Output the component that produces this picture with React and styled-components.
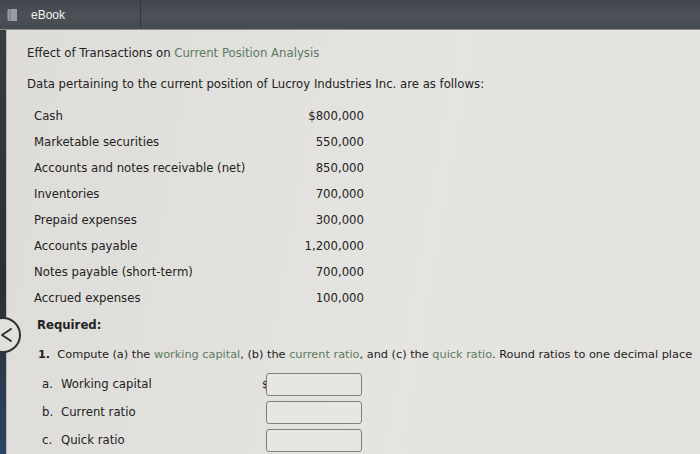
import styled, { createGlobalStyle } from "styled-components";

const GlobalStyle = createGlobalStyle`
  html, body {
    margin: 0;
    padding: 0;
    background: #e3e1de;
  }
  * { box-sizing: border-box; }
`;

const rows = [
  { label: "Cash", value: "$800,000" },
  { label: "Marketable securities", value: "550,000" },
  { label: "Accounts and notes receivable (net)", value: "850,000" },
  { label: "Inventories", value: "700,000" },
  { label: "Prepaid expenses", value: "300,000" },
  { label: "Accounts payable", value: "1,200,000" },
  { label: "Notes payable (short-term)", value: "700,000" },
  { label: "Accrued expenses", value: "100,000" },
];

const answers = [
  { letter: "a.", label: "Working capital", dollar: true },
  { letter: "b.", label: "Current ratio" },
  { letter: "c.", label: "Quick ratio" },
];

export default function App() {
  return (
    <Page>
      <GlobalStyle />
      <TopBar>
        <Tab>
          <BookIcon />
          <span>eBook</span>
        </Tab>
      </TopBar>
      <Body>
        <Rail />
        <BackButton aria-label="back">
          <svg width="20" height="20" viewBox="0 0 20 20">
            <path d="M14 4 L5 10 L14 16" fill="none" stroke="#2d2f31" strokeWidth="2" strokeLinecap="round" strokeLinejoin="round" />
          </svg>
        </BackButton>
        <Content>
          <Title>
            Effect of Transactions on <Term>Current Position Analysis</Term>
          </Title>
          <Intro>Data pertaining to the current position of Lucroy Industries Inc. are as follows:</Intro>
          <DataTable>
            {rows.map((r) => (
              <DataRow key={r.label}>
                <span>{r.label}</span>
                <Amount>{r.value}</Amount>
              </DataRow>
            ))}
          </DataTable>
          <Required>Required:</Required>
          <Question>
            <b>1.</b>&nbsp; Compute (a) the <Term>working capital</Term>, (b) the <Term>current ratio</Term>, and (c) the{" "}
            <Term>quick ratio</Term>. Round ratios to one decimal place
          </Question>
          <Answers>
            {answers.map((a) => (
              <AnswerRow key={a.letter}>
                <Letter>{a.letter}</Letter>
                <AnswerLabel>{a.label}</AnswerLabel>
                <Dollar>{a.dollar ? "$" : ""}</Dollar>
                <Input />
              </AnswerRow>
            ))}
          </Answers>
        </Content>
      </Body>
    </Page>
  );
}

function BookIcon() {
  return (
    <svg width="12" height="14" viewBox="0 0 12 14">
      <path d="M2 1 h8 v12 h-8 q-1.5 0 -1.5 -1.5 v-9 q0 -1.5 1.5 -1.5 z" fill="#9a9ea2" />
      <path d="M3 1 v12" stroke="#6f7377" strokeWidth="1" />
    </svg>
  );
}

const Page = styled.div`
  width: 700px;
  height: 454px;
  display: flex;
  flex-direction: column;
  overflow: hidden;
  font-family: "DejaVu Sans", Verdana, sans-serif;
  color: #222;
  background: linear-gradient(100deg, #dedcd9 0%, #e6e4e1 60%, #e4e2df 100%);
`;

const TopBar = styled.div`
  height: 30px;
  flex-shrink: 0;
  display: flex;
  background: linear-gradient(180deg, #42474d 0%, #4c5157 55%, #454a50 100%);
  border-bottom: 1px solid #8a8c8e;
`;

const Tab = styled.div`
  width: 141px;
  display: flex;
  align-items: center;
  gap: 12px;
  padding-left: 7px;
  border-right: 1px solid #34383c;
  color: #f2f2f2;
  font-family: "Liberation Sans", Arial, sans-serif;
  font-size: 12px;
`;

const Body = styled.div`
  position: relative;
  flex: 1;
  display: flex;
`;

const Rail = styled.div`
  width: 7px;
  flex-shrink: 0;
  background: linear-gradient(180deg, #3a3d40 0%, #2c2f32 60%, #2b4463 100%);
  border-right: 1px solid #b9bbbd;
`;

const BackButton = styled.div`
  position: absolute;
  left: -15px;
  top: 287px;
  width: 36px;
  height: 36px;
  border-radius: 50%;
  border: 2px solid #2f3133;
  background: #e2e0dd;
  display: flex;
  align-items: center;
  justify-content: flex-end;
  padding-right: 2px;
`;

const Content = styled.div`
  flex: 1;
  display: flex;
  flex-direction: column;
  padding: 15px 0 0 20px;
  font-size: 11.7px;
  white-space: nowrap;
`;

const Title = styled.div`
  line-height: 16px;
`;

const Term = styled.span`
  color: #5a7b5e;
`;

const Intro = styled.div`
  line-height: 16px;
  margin-top: 15px;
`;

const DataTable = styled.div`
  margin-top: 11px;
  width: 337px;
  padding-left: 7px;
`;

const DataRow = styled.div`
  height: 26px;
  display: flex;
  align-items: center;
  justify-content: space-between;
`;

const Amount = styled.span`
  text-align: right;
`;

const Required = styled.div`
  margin-top: 6px;
  padding-left: 10px;
  line-height: 16px;
  font-weight: bold;
`;

const Question = styled.div`
  margin-top: 14px;
  padding-left: 11px;
  line-height: 16px;
  font-size: 11.3px;
`;

const Answers = styled.div`
  margin-top: 7px;
  display: flex;
  flex-direction: column;
`;

const AnswerRow = styled.div`
  height: 28px;
  display: grid;
  grid-template-columns: 19px 201px 4px 96px;
  align-items: center;
  padding-left: 15px;
`;

const Letter = styled.span``;

const AnswerLabel = styled.span``;

const Dollar = styled.span`
  font-size: 10px;
  text-align: right;
`;

const Input = styled.div`
  height: 23px;
  border: 1.5px solid #7d7f81;
  border-radius: 3px;
  background: #e8e6e3;
`;
